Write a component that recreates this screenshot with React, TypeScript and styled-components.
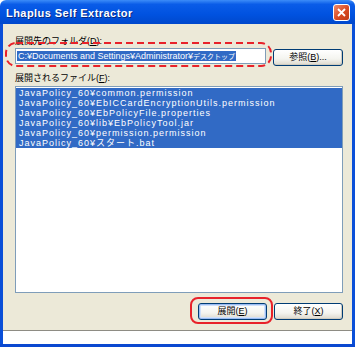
import styled, { createGlobalStyle } from "styled-components";

const GlobalStyle = createGlobalStyle`
    html, body {
        margin: 0;
        padding: 0;
        background: #ffffff;
    }
    body {
        font-family: "Liberation Sans", "Noto Sans CJK JP", sans-serif;
    }
`;

const Window = styled.div`
    width: 355px;
    height: 347px;
    display: flex;
    flex-direction: column;
    overflow: hidden;
`;

const TitleBar = styled.div`
    height: 24px;
    flex: none;
    display: flex;
    align-items: center;
    justify-content: space-between;
    padding: 0 5px 0 6px;
    box-sizing: border-box;
    background: linear-gradient(#3c8cf8 0%, #0a5ce8 18%, #0052e0 60%, #0048cc 100%);
    border-radius: 6px 6px 0 0;
`;

const Title = styled.span`
    color: #ffffff;
    font: bold 11px "Liberation Sans", sans-serif;
    letter-spacing: 0.45px;
    text-shadow: 1px 1px 0 #0a2a80;
    margin-top: 1px;
`;

const CloseButton = styled.div`
    width: 17px;
    height: 17px;
    box-sizing: border-box;
    border: 1px solid #ffffff;
    border-radius: 3px;
    background: linear-gradient(135deg, #f08a6a, #d84a22 55%, #c03c18);
    display: flex;
    align-items: center;
    justify-content: center;
    margin-top: 1px;
`;

const Body = styled.div`
    height: 306px;
    flex: none;
    background: #ece9d8;
    border-left: 3px solid #0a4fd8;
    border-right: 3px solid #0a4fd8;
    padding: 11px 9px 0 12px;
    box-sizing: border-box;
    display: flex;
    flex-direction: column;
`;

const Label = styled.div<{ $gap?: number }>`
    font-size: 9px;
    line-height: 12px;
    height: 12px;
    color: #000000;
    margin-top: ${(p) => p.$gap ?? 0}px;
`;

const Row = styled.div`
    display: flex;
    align-items: flex-start;
    gap: 7px;
    margin-top: 1px;
`;

const Mark = styled.div`
    position: relative;
    display: flex;
`;

const PathInput = styled.div`
    width: 251px;
    height: 16px;
    box-sizing: border-box;
    background: #ffffff;
    border: 1px solid #7f9db9;
    padding: 1px 0 0 1px;
    font-size: 9px;
    line-height: 12px;
    white-space: nowrap;
`;

const Selected = styled.span`
    background: #316ac5;
    color: #ffffff;
    padding: 0 1px;
`;

const Kana = styled.span`
    font-size: 7px;
`;

const Overlay = styled.svg<{ $left: number; $top: number }>`
    position: absolute;
    left: ${(p) => p.$left}px;
    top: ${(p) => p.$top}px;
    pointer-events: none;
    overflow: visible;
`;

const Button = styled.div<{ $default?: boolean; $width: number; $top?: number }>`
    width: ${(p) => p.$width}px;
    height: 17px;
    margin-top: ${(p) => p.$top ?? 0}px;
    box-sizing: border-box;
    border: 1px solid #003c74;
    border-radius: 3px;
    background: linear-gradient(#ffffff 0%, #f4f4ef 60%, #dcd8cc 100%);
    box-shadow: ${(p) =>
        p.$default
            ? "inset 0 0 0 1px #9bbcf2, inset 0 0 0 2px #cfe0fa"
            : "inset -1px -1px 0 #d0ccc0"};
    font-size: 9px;
    line-height: 15px;
    text-align: center;
    color: #000000;
    white-space: nowrap;
`;

const ListBox = styled.div`
    height: 207px;
    width: 328px;
    margin-top: 2px;
    box-sizing: border-box;
    background: #ffffff;
    border: 1px solid #7f9db9;
    padding-top: 1px;
`;

const ListItem = styled.div<{ $selected?: boolean }>`
    height: 10px;
    line-height: 10px;
    font-size: 9px;
    letter-spacing: 1px;
    padding-left: 3px;
    white-space: nowrap;
    background: ${(p) => (p.$selected ? "#316ac5" : "transparent")};
    color: ${(p) => (p.$selected ? "#ffffff" : "#000000")};
`;

const ButtonRow = styled.div`
    display: flex;
    justify-content: flex-end;
    gap: 7px;
    margin-top: 10px;
`;

const Separator = styled.div`
    height: 1px;
    flex: none;
    background: #8e8c84;
    border-left: 3px solid #0a4fd8;
    border-right: 3px solid #0a4fd8;
`;

const WhiteStrip = styled.div`
    height: 13px;
    flex: none;
    background: #ffffff;
    border-left: 3px solid #0a4fd8;
    border-right: 3px solid #0a4fd8;
`;

const BottomBorder = styled.div`
    height: 3px;
    flex: none;
    background: #0a48d0;
`;

const files = [
    "JavaPolicy_60¥common.permission",
    "JavaPolicy_60¥EbICCardEncryptionUtils.permission",
    "JavaPolicy_60¥EbPolicyFile.properties",
    "JavaPolicy_60¥lib¥EbPolicyTool.jar",
    "JavaPolicy_60¥permission.permission",
    "JavaPolicy_60¥スタート.bat",
];

export default function App() {
    return (
        <Window>
            <GlobalStyle />
            <TitleBar>
                <Title>Lhaplus Self Extractor</Title>
                <CloseButton>
                    <svg width="9" height="9" viewBox="0 0 9 9">
                        <path d="M1 1 L8 8 M8 1 L1 8" stroke="#ffffff" strokeWidth="1.8" />
                    </svg>
                </CloseButton>
            </TitleBar>

            <Body>
                <Label>展開先のフォルダ(<u>D</u>):</Label>
                <Row>
                    <Mark>
                        <PathInput>
                            <Selected>
                                C:¥Documents and Settings¥Administrator¥<Kana>デスクトップ</Kana>
                            </Selected>
                        </PathInput>
                        <Overlay $left={-10} $top={-6} width="267" height="25">
                            <rect
                                x="1"
                                y="1"
                                width="265"
                                height="23"
                                rx="10"
                                fill="none"
                                stroke="#e8222a"
                                strokeWidth="2"
                                strokeDasharray="7 4"
                            />
                        </Overlay>
                    </Mark>
                    <Button $width={70} $top={1}>
                        参照(<u>B</u>)...
                    </Button>
                </Row>

                <Label $gap={6}>展開されるファイル(<u>F</u>):</Label>
                <ListBox>
                    {files.map((f) => (
                        <ListItem key={f} $selected>
                            {f}
                        </ListItem>
                    ))}
                </ListBox>

                <ButtonRow>
                    <Mark>
                        <Button $default $width={69}>
                            展開(<u>E</u>)
                        </Button>
                        <Overlay $left={-8} $top={-6} width="83" height="27">
                            <rect
                                x="1"
                                y="1"
                                width="81"
                                height="25"
                                rx="7"
                                fill="none"
                                stroke="#e8222a"
                                strokeWidth="2"
                            />
                        </Overlay>
                    </Mark>
                    <Button $width={69}>
                        終了(<u>X</u>)
                    </Button>
                </ButtonRow>
            </Body>
            <Separator />
            <WhiteStrip />
            <BottomBorder />
        </Window>
    );
}
